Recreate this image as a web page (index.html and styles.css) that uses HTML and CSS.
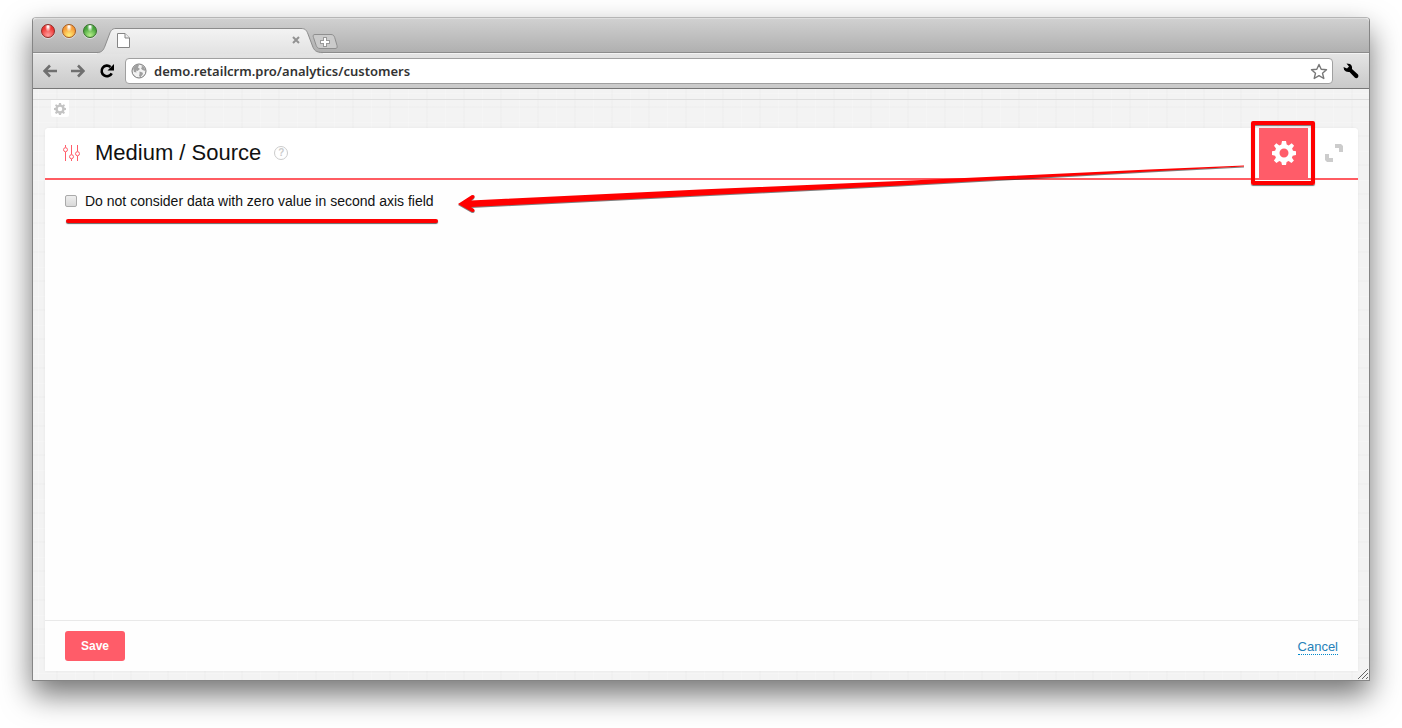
FILE: index.html
```html
<!DOCTYPE html>
<html lang="en">
<head>
  <meta charset="UTF-8" />
  <meta name="viewport" content="width=device-width, initial-scale=1.0" />
  <title>Medium / Source</title>
  <link rel="stylesheet" href="styles.css">
</head>
<body>
  <svg class="defs" width="0" height="0" aria-hidden="true">
    <symbol id="gear" viewBox="0 0 24 24">
      <path fill-rule="evenodd" d="M10 0h4l.7 3.500 2 .9L19.700 2.300l2.400 2.400-2 2.900.9 2.100 3 .5v3.800l-3.300.7-.8 2 2 2.900-2.400 2.500-2.900-2-2 .8L14 24h-4l-.7-3.100-2-.8-2.900 2-2.500-2.500 2-2.900-.8-2L0 14v-3.800l3.100-.5.9-2.100-2-2.900L4.300 2.300l3 2.100 2-.9zM12 7.500a4.500 4.500 0 1 0 0 9a4.500 4.500 0 0 0 0-9z"/>
    </symbol>
  </svg>

  <div class="window">
    <div class="tabbar">
      <div class="lights">
        <button class="light red" aria-label="Close window"></button>
        <button class="light orange" aria-label="Minimize window"></button>
        <button class="light green" aria-label="Zoom window"></button>
      </div>
      <div class="tab">
        <svg class="tab-shape" width="226" height="26" viewBox="0 0 226 26">
          <defs>
            <linearGradient id="tabfill" x1="0" y1="0" x2="0" y2="1">
              <stop offset="0" stop-color="#f3f3f3"/>
              <stop offset="1" stop-color="#e2e2e2"/>
            </linearGradient>
          </defs>
          <path d="M0 26V24.500C5 24.500 6.500 22 8 18L12.500 6C14 2 15.500.5 19 .5H204C208 .5 209.500 2 211 6L215.500 18C217 22 218.500 24.500 226 24.500V26z" fill="url(#tabfill)"/>
          <path d="M0 24.500C5 24.500 6.500 22 8 18L12.500 6C14 2 15.500.5 19 .5H204C208 .5 209.500 2 211 6L215.500 18C217 22 218.500 24.500 226 24.500" fill="none" stroke="#8c8c8c"/>
        </svg>
        <svg class="tab-page" width="13" height="15" viewBox="0 0 13 15">
          <path d="M.5.5H8L12.500 5V14.500H.5z" fill="#fff" stroke="#858585"/>
          <path d="M8 .5V5H12.500" fill="#eee" stroke="#858585"/>
        </svg>
        <button class="tab-close" aria-label="Close tab">
          <svg width="8" height="8" viewBox="0 0 8 8"><path d="M1 1L7 7M7 1L1 7" stroke="#929292" stroke-width="2"/></svg>
        </button>
      </div>
      <button class="new-tab" aria-label="New tab">
        <svg width="26" height="17" viewBox="0 0 26 17">
          <path d="M3 1.500H19C21 1.500 22 2.500 22.700 4.500L25 12.500C25.500 15 25 15.500 23 15.500H8C6 15.500 5 14.500 4.200 12.500L1.500 4.500C.8 2.500 1 1.500 3 1.500z" fill="#cbcbcb" stroke="#8f8f8f"/>
          <path d="M13 4V14M8 9H18" stroke="#999" stroke-width="4"/>
          <path d="M13 5V13M9 9H17" stroke="#fff" stroke-width="2"/>
        </svg>
      </button>
    </div>

    <div class="toolbar">
      <button class="nav" aria-label="Back">
        <svg width="14" height="14" viewBox="0 0 14 14"><path d="M7 1.500L1.500 7L7 12.500M2 7H14" fill="none" stroke="#6f6f6f" stroke-width="2.600"/></svg>
      </button>
      <button class="nav" aria-label="Forward">
        <svg width="14" height="14" viewBox="0 0 14 14"><path d="M7 1.500L12.500 7L7 12.500M12 7H0" fill="none" stroke="#6f6f6f" stroke-width="2.600"/></svg>
      </button>
      <button class="nav" aria-label="Reload">
        <svg width="16" height="16" viewBox="0 0 16 16"><path d="M11.500 4A5.300 5.300 0 1 0 12.700 10.300" fill="none" stroke="#000" stroke-width="2.600"/><path d="M15 1V7.500H8.500z"/></svg>
      </button>
      <div class="address">
        <svg width="16" height="16" viewBox="0 0 16 16">
          <circle cx="8" cy="8" r="7" fill="#f2f2f2" stroke="#777"/>
          <path d="M2 5L5 1.700L8 2L7 4.500L9 6L6.500 8L5 7.500L5.500 9.500L3 9zM10 2L13.500 4.500L14.400 8L11.500 7L10 5.500L11 4zM8.500 8.500L11.500 9.500L12 11L9.500 14.300L8 13L8.500 11z" fill="#a0a0a0"/>
        </svg>
        <input class="url" type="text" aria-label="Address" value="demo.retailcrm.pro/analytics/customers">
        <button class="bookmark" aria-label="Bookmark">
          <svg width="18" height="17" viewBox="0 0 18 17"><path d="M9 1.500L11.200 6.300L16.500 6.700L12.500 10.200L13.800 15.500L9 12.600L4.200 15.500L5.500 10.200L1.500 6.700L6.800 6.300z" fill="#fff" stroke="#777" stroke-width="1.400" stroke-linejoin="round"/></svg>
        </button>
      </div>
      <button class="wrench" aria-label="Settings">
        <svg width="16" height="16" viewBox="0 0 16 16"><path d="M3.500.5L7 1Q9.500 2.500 9 6L15 11.500Q16 13 14.900 14.400Q13.500 15.800 12 14.800L6.500 9Q3 9.500 1.200 7L.5 4L4 5.500L6 3.500z"/></svg>
      </button>
    </div>

    <div class="page">
      <button class="page-settings" aria-label="Page settings">
        <svg width="12" height="12"><use href="#gear"/></svg>
      </button>

      <form class="panel">
        <div class="panel-header">
          <svg class="sliders" width="17" height="17" viewBox="0 0 17 17" fill="none" stroke="#ff5c69">
            <path d="M2.500 0V2.500M2.500 7V16M8.500 0V9.500M8.500 14V16M14.500 0V6.500M14.500 11V16"/>
            <circle cx="2.500" cy="4.700" r="2"/>
            <circle cx="8.500" cy="11.700" r="2"/>
            <circle cx="14.500" cy="8.700" r="2"/>
          </svg>
          <h1>Medium / Source</h1>
          <button type="button" class="help" aria-label="Help">?</button>
          <button type="button" class="panel-settings" aria-label="Widget settings">
            <svg width="24" height="24"><use href="#gear"/></svg>
          </button>
          <button type="button" class="expand" aria-label="Expand">
            <svg width="18" height="18" viewBox="0 0 18 18" fill="#ccc"><path d="M10 0H16L18 2V8H14V4H10zM0 10H4V14H8V18H2L0 16z"/></svg>
          </button>
        </div>

        <div class="panel-body">
          <label class="option">
            <input type="checkbox">
            Do not consider data with zero value in second axis field
          </label>
        </div>

        <div class="panel-footer">
          <button type="button" class="save">Save</button>
          <a href="#" class="cancel">Cancel</a>
        </div>

        <svg class="arrow" viewBox="0 0 788 52" preserveAspectRatio="none" aria-hidden="true">
          <path d="M787 .5L692 4.500L442 16L242 24.500L13 35.500L16 33Q18 30 14 30L0 39L14 47Q18 47 16 44L13 42L242 30.500L442 20.500L692 6.500L787 1.500z" fill="#f00"/>
        </svg>
      </form>

      <svg class="grip" width="12" height="12" viewBox="0 0 12 12"><path d="M1 11L11 1M5 11L11 5M9 11L11 9" stroke="#666" stroke-width="1"/></svg>
    </div>
  </div>
</body>
</html>
```

FILE: styles.css
```css
* {
  box-sizing: border-box;
}
body {
  margin: 0;
  padding: 17px 32px 47px;
  min-height: 100vh;
  display: flex;
  flex-direction: column;
  background: #fff;
  font-family: "Liberation Sans", Arial, sans-serif;
  color: #111;
}
button {
  padding: 0;
  border: 0;
  background: none;
  font-family: inherit;
  cursor: pointer;
}
svg {
  display: block;
  flex: none;
}
.defs {
  position: absolute;
}

/* browser window */
.window {
  flex: 1;
  display: flex;
  flex-direction: column;
  border: 1px solid #858585;
  border-top-color: #b5b5b5;
  border-radius: 4px 4px 0 0;
  box-shadow: 0 14px 30px rgba(0, 0, 0, 0.55);
}
.tabbar {
  height: 35px;
  display: flex;
  align-items: flex-end;
  padding-left: 8px;
  border-top: 1px solid #dedede;
  border-bottom: 1px solid #8c8c8c;
  border-radius: 4px 4px 0 0;
  background: linear-gradient(#d0d0d0, #b0b0b0);
}
.lights {
  display: flex;
  gap: 7px;
  align-self: flex-start;
  padding-top: 5px;
}
.light {
  width: 14px;
  height: 14px;
  border-radius: 50%;
  border: 1px solid #8f2a25;
  box-shadow: 0 1px 0 #ddd;
}
.red {
  background: radial-gradient(ellipse at 50% 15%, #fff 5%, transparent 35%), radial-gradient(circle at 50% 85%, #ff9d9d, #ed3532 65%);
}
.orange {
  border-color: #a65b20;
  background: radial-gradient(ellipse at 50% 15%, #fff 5%, transparent 35%), radial-gradient(circle at 50% 85%, #fff07a, #f79a35 65%);
}
.green {
  border-color: #38702d;
  background: radial-gradient(ellipse at 50% 15%, #fff 5%, transparent 35%), radial-gradient(circle at 50% 85%, #b6f08a, #45a33a 65%);
}
.tab {
  position: relative;
  width: 226px;
  height: 24px;
  display: flex;
  align-items: center;
  justify-content: space-between;
  padding: 0 23px 0 20px;
}
.tab-shape {
  position: absolute;
  left: 0;
  bottom: -2px;
}
.tab-page,
.tab-close {
  position: relative;
}
.new-tab {
  margin: 0 0 2px -11px;
  z-index: 1;
}
.toolbar {
  height: 36px;
  display: flex;
  align-items: center;
  gap: 14px;
  padding: 0 10px;
  border-top: 1px solid #f3f3f3;
  border-bottom: 1px solid #777;
  background: linear-gradient(#e4e4e4, #c9c9c9);
}
.address {
  flex: 1;
  height: 26px;
  display: flex;
  align-items: center;
  gap: 7px;
  margin: 0 -4px;
  padding: 0 4px 0 5px;
  border: 1px solid #a0a0a0;
  border-radius: 4px;
  background: #fff;
}
.url {
  flex: 1;
  min-width: 0;
  padding: 0;
  border: 0;
  outline: 0;
  background: none;
  font: 600 13px/20px "Noto Sans", sans-serif;
  color: #333;
}

/* page content */
.page {
  flex: 1;
  position: relative;
  display: flex;
  flex-direction: column;
  align-items: flex-start;
  padding: 10px 11px 9px 12px;
  background:
    linear-gradient(#dedede, #dedede) 0 10px / 100% 1px no-repeat,
    repeating-linear-gradient(90deg, transparent 0 5px, rgba(255, 255, 255, 0.2) 5px 6px, transparent 6px 23px, rgba(0, 0, 0, 0.01) 23px 25px, transparent 25px 37px),
    repeating-linear-gradient(transparent 0 4px, rgba(255, 255, 255, 0.2) 4px 5px, transparent 5px 17px, rgba(0, 0, 0, 0.01) 17px 19px, transparent 19px 29px),
    #f3f3f3;
}
.page-settings {
  width: 18px;
  height: 17px;
  display: flex;
  align-items: center;
  justify-content: center;
  margin: 1px 0 11px 6px;
  border-radius: 0 0 2px 2px;
  background: #fff;
  fill: #c4c4c4;
}
.panel {
  position: relative;
  flex: 1;
  align-self: stretch;
  display: flex;
  flex-direction: column;
  border-radius: 4px 4px 0 0;
  background: #fefefe;
  box-shadow: 0 0 3px rgba(0, 0, 0, 0.06);
}
.panel-header {
  height: 52px;
  display: flex;
  align-items: center;
  padding: 0 15px 0 18px;
  border-bottom: 2px solid #ff5c62;
  border-radius: 4px 4px 0 0;
  background: #fff;
}
h1 {
  margin: 0 13px 0 15px;
  font-size: 22px;
  line-height: 26px;
  font-weight: normal;
}
.help {
  width: 14px;
  height: 14px;
  border: 1px solid #ccc;
  border-radius: 50%;
  font-size: 10px;
  line-height: 12px;
  font-weight: bold;
  color: #ccc;
}
.panel-settings {
  position: relative;
  align-self: flex-start;
  width: 49px;
  height: 52px;
  display: flex;
  align-items: center;
  justify-content: center;
  margin: 0 17px 0 auto;
  padding-bottom: 2px;
  background: #ff5c69;
  fill: #fff;
}
/* red frame round the settings button */
.panel-settings::after {
  content: "";
  position: absolute;
  inset: -7px -7px -5px -8px;
  border: 4px solid #f00;
  border-radius: 2px;
  box-shadow: 0 1px 1px #777, inset 0 1px 1px #777;
}
.panel-body {
  flex: 1;
  padding: 12px 20px;
}
.option {
  position: relative;
  display: inline-flex;
  align-items: center;
  gap: 8px;
  font-size: 14px;
  line-height: 18px;
}
.option::after {
  content: "";
  position: absolute;
  inset: 27px -4px auto 1px;
  height: 4px;
  border-radius: 2px;
  background: #f00;
  box-shadow: 0 1px 1px #666;
}
.option input {
  appearance: none;
  width: 12px;
  height: 12px;
  margin: 0;
  border: 1px solid #aaa;
  border-radius: 2px;
  background: linear-gradient(#eee, #d9d9d9);
}
.option input:checked {
  background: #ff5c69;
}
.panel-footer {
  display: flex;
  align-items: center;
  justify-content: space-between;
  padding: 10px 20px;
  border-top: 1px solid #e9e9e9;
}
.save {
  width: 60px;
  height: 30px;
  border-radius: 3px;
  background: #ff5c69;
  color: #fff;
  font-size: 12px;
  font-weight: bold;
}
.cancel {
  padding-top: 2px;
  border-bottom: 1px dotted #0088cc;
  color: #2581b9;
  font-size: 13px;
  line-height: 15px;
  text-decoration: none;
}
.arrow {
  position: absolute;
  left: 413px;
  top: 37px;
  width: calc(100% - 526px);
  height: 52px;
  overflow: visible;
  pointer-events: none;
  filter: drop-shadow(0 1px 0 rgba(0, 0, 0, 0.5));
}
.grip {
  position: absolute;
  right: 0;
  bottom: 0;
}
```
